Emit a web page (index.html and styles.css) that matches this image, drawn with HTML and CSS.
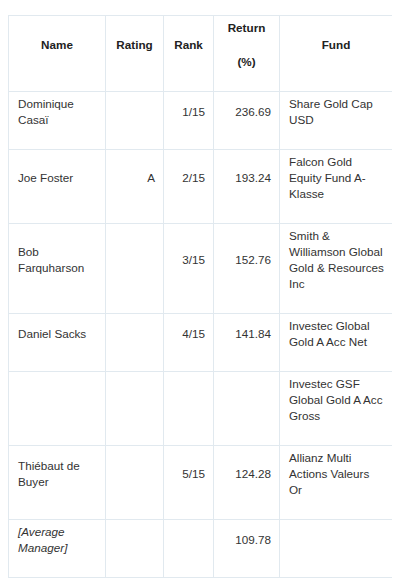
FILE: index.html
```html
<!DOCTYPE html>
<html>
<head>
<meta charset="utf-8">
<link rel="stylesheet" href="styles.css">
</head>
<body>
<table class="grid">
  <colgroup>
    <col class="c-name"><col class="c-rating"><col class="c-rank"><col class="c-return"><col class="c-fund">
  </colgroup>
  <thead>
    <tr>
      <th>Name</th>
      <th>Rating</th>
      <th>Rank</th>
      <th>Return<br><br>(%)</th>
      <th>Fund</th>
    </tr>
  </thead>
  <tbody>
    <tr><td>Dominique Casaï</td><td class="num"></td><td class="num">1/15</td><td class="num">236.69</td><td class="fund">Share Gold Cap USD</td></tr>
    <tr><td>Joe Foster</td><td class="num">A</td><td class="num">2/15</td><td class="num">193.24</td><td class="fund">Falcon Gold Equity Fund A-Klasse</td></tr>
    <tr><td>Bob Farquharson</td><td class="num"></td><td class="num">3/15</td><td class="num">152.76</td><td class="fund">Smith &amp; Williamson Global Gold &amp; Resources Inc</td></tr>
    <tr><td>Daniel Sacks</td><td class="num"></td><td class="num">4/15</td><td class="num">141.84</td><td class="fund">Investec Global Gold A Acc Net</td></tr>
    <tr><td></td><td class="num"></td><td class="num"></td><td class="num"></td><td class="fund">Investec GSF Global Gold A Acc Gross</td></tr>
    <tr><td>Thiébaut de Buyer</td><td class="num"></td><td class="num">5/15</td><td class="num">124.28</td><td class="fund">Allianz Multi Actions Valeurs Or</td></tr>
    <tr><td class="avg">[Average Manager]</td><td class="num"></td><td class="num"></td><td class="num">109.78</td><td class="fund"></td></tr>
  </tbody>
</table>
</body>
</html>
```

FILE: styles.css
```css
html, body {
  background: #ffffff;
}
body {
  margin: 15px 8px 8px 8px;
  font-family: "Liberation Sans", Arial, sans-serif;
  font-size: 11.7px;
  color: #333333;
}
.grid {
  width: 384px;
  table-layout: fixed;
  border-collapse: collapse;
  border: 1px solid #e1e9ef;
}
.c-name { width: 97px; }
.c-rating { width: 58px; }
.c-rank { width: 50px; }
.c-return { width: 66px; }
.c-fund { width: 113px; }

.grid th,
.grid td {
  border: 1px solid #e1e9ef;
  vertical-align: middle;
}
.grid th {
  font-weight: bold;
  color: #222222;
  text-align: center;
  line-height: 17px;
  padding: 3px 8px 21px 8px;
}
.grid td {
  line-height: 16px;
  padding: 4px 8px 21px 9px;
  text-align: left;
}
.grid td.num {
  text-align: right;
}
.grid td.avg {
  font-style: italic;
}
```
